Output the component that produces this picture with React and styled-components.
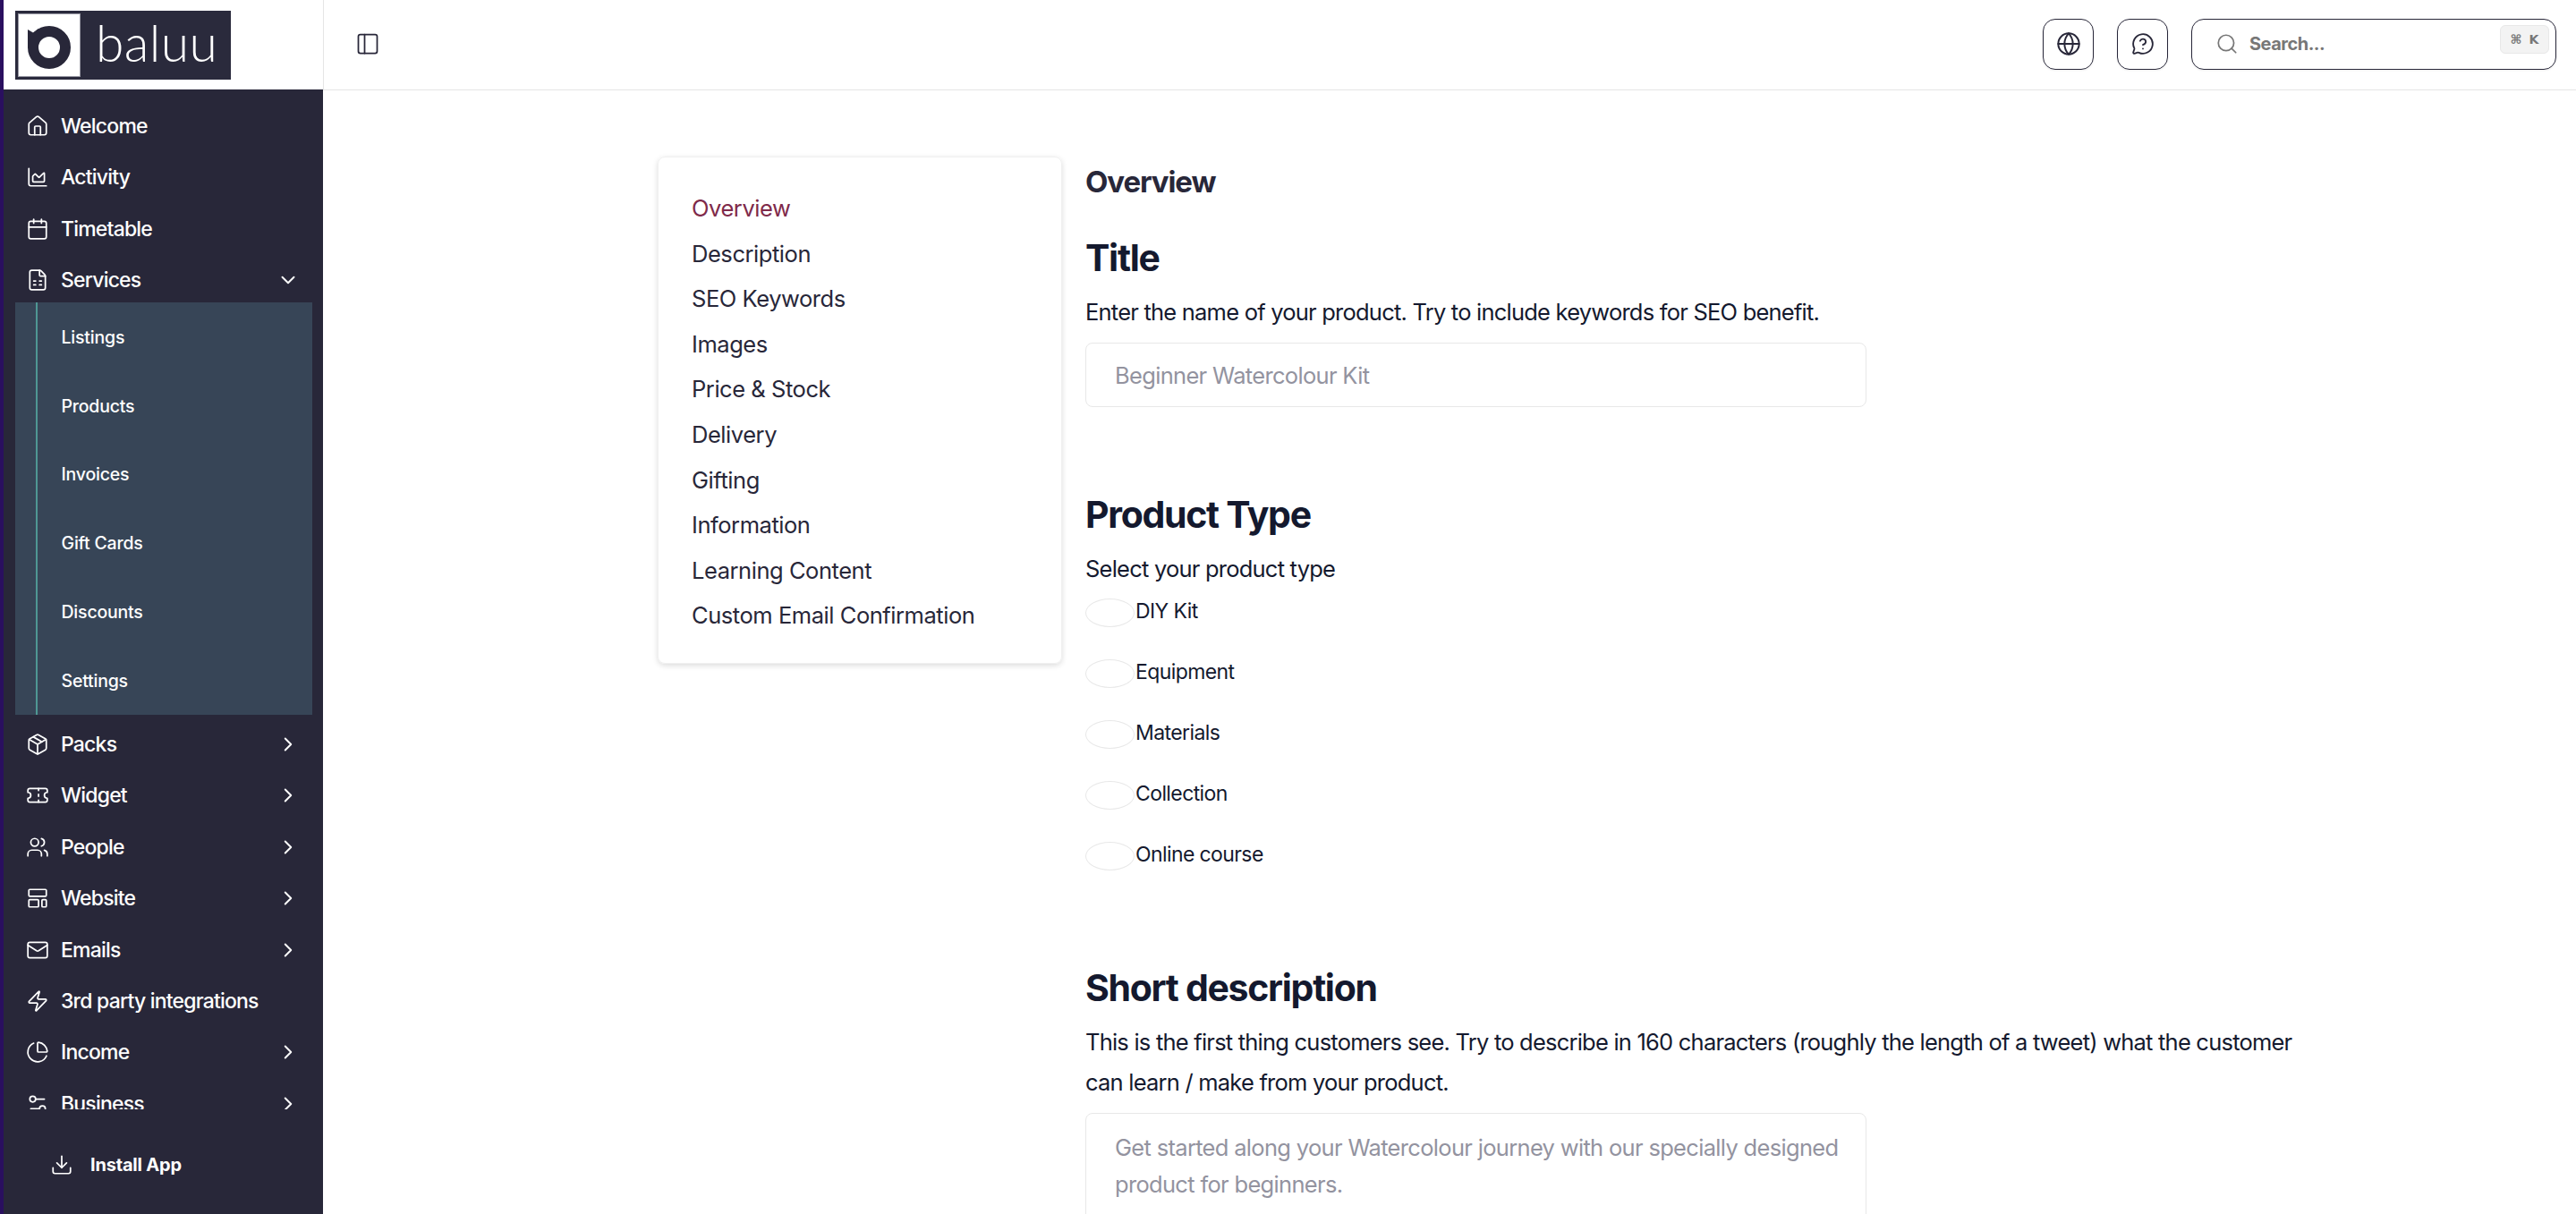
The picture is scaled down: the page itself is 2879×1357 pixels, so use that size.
import {
  Calendar,
  ChartArea,
  ChevronDown,
  ChevronRight,
  Download,
  FileSpreadsheet,
  Globe,
  Home,
  Mail,
  MessageCircleQuestion,
  Package,
  PanelLeft,
  PieChart,
  Search,
  Settings2,
  Ticket,
  Users,
  Zap,
} from "lucide-react";
import styled, { createGlobalStyle } from "styled-components";

const GlobalStyle = createGlobalStyle`
  html, body {
    margin: 0;
    padding: 0;
    background: #fff;
    font-family: Inter, "Liberation Sans", sans-serif;
    overflow: hidden;
  }
  * {
    box-sizing: border-box;
  }
`;

const Page = styled.div`
  display: flex;
  height: 100vh;
  overflow: hidden;
`;

const Sidebar = styled.aside`
  flex: 0 0 361px;
  display: flex;
  flex-direction: column;
  border-left: 4px solid #2a0f5f;
  background: #282739;
`;

const LogoBar = styled.div`
  flex: 0 0 100px;
  padding: 12px 0 0 13px;
  background: #fff;
`;

const LogoBox = styled.div`
  display: flex;
  align-items: center;
  width: 241px;
  height: 77px;
  padding: 3px;
  background: #2a2a3c;
`;

const LogoMark = styled.div`
  flex: 0 0 70px;
  height: 71px;
  background: #fff;
  border: 1px solid #9a9aa5;
`;

const LogoWord = styled.span`
  margin: -6px 0 0 17px;
  font-family: Lato, sans-serif;
  font-size: 57px;
  font-weight: 300;
  line-height: 1;
  letter-spacing: 0.4px;
  color: #fff;
`;

const NavScroll = styled.nav`
  flex: 0 0 1140px;
  display: flex;
  flex-direction: column;
  gap: 7.45px;
  padding-top: 16px;
  overflow: hidden;
`;

const NavRow = styled.div`
  flex: 0 0 50px;
  display: flex;
  align-items: center;
  gap: 13px;
  padding: 0 26px 0 25px;
  font-size: 23px;
  font-weight: 500;
  letter-spacing: -0.8px;
  color: #fff;
`;

const NavLabel = styled.span`
  flex: 1;
`;

const NavGroup = styled.div`
  display: flex;
  flex-direction: column;
`;

const SubPanel = styled.div`
  width: 332px;
  margin-left: 13px;
  padding-left: 23px;
  background: #374557;
`;

const SubList = styled.div`
  border-left: 2px solid #4f9794;
  padding-left: 26.5px;
`;

const SubRow = styled.div`
  display: flex;
  align-items: center;
  height: 76.85px;
  font-size: 19.5px;
  font-weight: 500;
  letter-spacing: -0.2px;
  color: #fff;
`;

const InstallRow = styled.div`
  flex: 1;
  display: flex;
  align-items: center;
  gap: 19px;
  padding: 7px 0 0 52px;
  font-size: 20px;
  font-weight: 700;
  letter-spacing: -0.2px;
  color: #fff;
`;

const Content = styled.div`
  flex: 1;
  display: flex;
  flex-direction: column;
  min-width: 0;
`;

const TopBar = styled.header`
  flex: 0 0 101px;
  display: flex;
  align-items: center;
  padding: 1px 22px 3px 35px;
  border-bottom: 1px solid #e5e5e5;
  border-left: 1px solid #e5e5e5;
`;

const ToggleButton = styled.div`
  display: flex;
  margin-right: auto;
  color: #282739;
`;

const IconButton = styled.div`
  display: flex;
  align-items: center;
  justify-content: center;
  width: 57px;
  height: 57px;
  margin-right: 26px;
  border: 1px solid #282739;
  border-radius: 14px;
  color: #282739;
  box-shadow: 0 1px 2px rgba(0, 0, 0, 0.08);
`;

const SearchBox = styled.div`
  display: flex;
  align-items: center;
  width: 408px;
  height: 57px;
  padding: 0 7px 0 26px;
  border: 1px solid #282739;
  border-radius: 14px;
  color: #777;
  box-shadow: 0 1px 2px rgba(0, 0, 0, 0.08);
`;

const SearchText = styled.span`
  flex: 1;
  margin-left: 12px;
  font-size: 20px;
  font-weight: 700;
  letter-spacing: -0.5px;
`;

const Kbd = styled.kbd`
  display: flex;
  align-items: center;
  justify-content: center;
  gap: 8px;
  width: 55px;
  height: 32px;
  margin-top: -10px;
  border: 1px solid #e8e8e8;
  border-radius: 6px;
  background: #f3f3f3;
  font-family: "DejaVu Sans", sans-serif;
  font-size: 14px;
  font-weight: 700;
  color: #777;
`;

const Main = styled.main`
  flex: 1;
  display: flex;
  align-items: flex-start;
  gap: 26px;
  padding: 73.5px 0 0 374px;
  overflow: hidden;
`;

const SectionCard = styled.div`
  flex: 0 0 452px;
  padding: 32.5px 37px 27.5px;
  border-radius: 8px;
  border: 1px solid #f0f0f0;
  box-shadow: 0 2px 6px rgba(0, 0, 0, 0.14);
`;

const SectionLink = styled.div`
  height: 50.6px;
  line-height: 50.6px;
  font-size: 25.5px;
  letter-spacing: -0.45px;
  color: ${(p) => (p.$active ? "#7f2a4a" : "#282739")};
`;

const Form = styled.div`
  flex: 0 0 1360px;
  padding-top: 8.5px;
`;

const PageTitle = styled.h2`
  margin: 0;
  font-size: 33px;
  font-weight: 700;
  line-height: 40px;
  letter-spacing: -1.1px;
  color: #282739;
`;

const Heading = styled.h3`
  margin: ${(p) => p.$top}px 0 0;
  font-size: 41px;
  font-weight: 700;
  line-height: 50px;
  letter-spacing: -1.3px;
  color: #14192e;
`;

const Help = styled.p`
  margin: 13px 0 0;
  font-size: 25.5px;
  line-height: 45px;
  letter-spacing: -0.78px;
  color: #14192e;
`;

const TextInput = styled.input`
  display: block;
  width: 873px;
  height: 72px;
  margin-top: 12px;
  padding: 0 32px;
  border: 1px solid #e8e8e8;
  border-radius: 8px;
  font: inherit;
  font-size: 25.5px;
  letter-spacing: -0.68px;

  &::placeholder {
    color: #93939f;
    opacity: 1;
  }
`;

const TextArea = styled.textarea`
  display: block;
  width: 873px;
  height: 200px;
  margin-top: 12px;
  padding: 17px 16px 17px 32px;
  border: 1px solid #e8e8e8;
  border-radius: 8px;
  resize: none;
  font: inherit;
  font-size: 25.5px;
  line-height: 41px;
  letter-spacing: -0.68px;

  &::placeholder {
    color: #93939f;
    opacity: 1;
  }
`;

const RadioList = styled.div`
  display: flex;
  flex-direction: column;
  gap: 36px;
  margin-top: 11px;
`;

const RadioRow = styled.label`
  display: flex;
  align-items: center;
  height: 32px;
  font-size: 23px;
  letter-spacing: -0.6px;
  color: #14192e;
`;

const RadioOval = styled.span`
  flex: 0 0 55px;
  height: 32px;
  border: 1px solid #e8e8e8;
  border-radius: 50%;
`;

const RadioText = styled.span`
  margin: -5px 0 0 1px;
`;

const LayoutIcon = ({ size, strokeWidth }) => (
  <svg width={size} height={size} viewBox="0 0 24 24" fill="none" stroke="currentColor" strokeWidth={strokeWidth} strokeLinejoin="round">
    <rect x="3" y="3" width="18" height="7" rx="1" />
    <rect x="3" y="13.5" width="10" height="7.5" rx="1" />
    <rect x="16.5" y="13.5" width="4.5" height="7.5" rx="1" />
  </svg>
);

const BaluuMark = () => (
  <svg width="68" height="69" viewBox="0 0 68 69">
    <polygon points="10,17 16,20.5 22,16 24,30 10,38" fill="#282739" />
    <circle cx="34" cy="37" r="18" fill="#fff" stroke="#282739" strokeWidth="12" />
  </svg>
);

// rows before and after the open Services group
const topNav = [
  { label: "Welcome", icon: Home },
  { label: "Activity", icon: ChartArea },
  { label: "Timetable", icon: Calendar },
];

const bottomNav = [
  { label: "Packs", icon: Package, more: true },
  { label: "Widget", icon: Ticket, more: true },
  { label: "People", icon: Users, more: true },
  { label: "Website", icon: LayoutIcon, more: true },
  { label: "Emails", icon: Mail, more: true },
  { label: "3rd party integrations", icon: Zap },
  { label: "Income", icon: PieChart, more: true },
  { label: "Business", icon: Settings2, more: true },
];

const subNav = ["Listings", "Products", "Invoices", "Gift Cards", "Discounts", "Settings"];

const sections = [
  "Overview",
  "Description",
  "SEO Keywords",
  "Images",
  "Price & Stock",
  "Delivery",
  "Gifting",
  "Information",
  "Learning Content",
  "Custom Email Confirmation",
];

const productTypes = ["DIY Kit", "Equipment", "Materials", "Collection", "Online course"];

const Row = ({ item }) => {
  const Icon = item.icon;
  return (
    <NavRow>
      <Icon size={26} strokeWidth={1.6} />
      <NavLabel>{item.label}</NavLabel>
      {item.more && <ChevronRight size={26} strokeWidth={1.8} />}
    </NavRow>
  );
};

const App = () => {
  return (
    <Page>
      <GlobalStyle />
      <Sidebar>
        <LogoBar>
          <LogoBox>
            <LogoMark>
              <BaluuMark />
            </LogoMark>
            <LogoWord>baluu</LogoWord>
          </LogoBox>
        </LogoBar>
        <NavScroll>
          {topNav.map((item) => (
            <Row key={item.label} item={item} />
          ))}
          <NavGroup>
            <NavRow>
              <FileSpreadsheet size={26} strokeWidth={1.6} />
              <NavLabel>Services</NavLabel>
              <ChevronDown size={26} strokeWidth={1.8} />
            </NavRow>
            <SubPanel>
              <SubList>
                {subNav.map((label) => (
                  <SubRow key={label}>{label}</SubRow>
                ))}
              </SubList>
            </SubPanel>
          </NavGroup>
          {bottomNav.map((item) => (
            <Row key={item.label} item={item} />
          ))}
        </NavScroll>
        <InstallRow>
          <Download size={26} strokeWidth={1.6} />
          Install App
        </InstallRow>
      </Sidebar>
      <Content>
        <TopBar>
          <ToggleButton>
            <PanelLeft size={28} strokeWidth={1.5} />
          </ToggleButton>
          <IconButton>
            <Globe size={28} strokeWidth={1.7} />
          </IconButton>
          <IconButton>
            <MessageCircleQuestion size={26} strokeWidth={1.7} />
          </IconButton>
          <SearchBox>
            <Search size={26} strokeWidth={1.6} />
            <SearchText>Search...</SearchText>
            <Kbd>
              <span>⌘</span>
              <span>K</span>
            </Kbd>
          </SearchBox>
        </TopBar>
        <Main>
          <SectionCard>
            {sections.map((label, i) => (
              <SectionLink key={label} $active={i === 0}>
                {label}
              </SectionLink>
            ))}
          </SectionCard>
          <Form>
            <PageTitle>Overview</PageTitle>
            <Heading $top={40}>Title</Heading>
            <Help>Enter the name of your product. Try to include keywords for SEO benefit.</Help>
            <TextInput placeholder="Beginner Watercolour Kit" />
            <Heading $top={95}>Product Type</Heading>
            <Help>Select your product type</Help>
            <RadioList>
              {productTypes.map((label) => (
                <RadioRow key={label}>
                  <RadioOval />
                  <RadioText>{label}</RadioText>
                </RadioRow>
              ))}
            </RadioList>
            <Heading $top={105.5}>Short description</Heading>
            <Help>
              This is the first thing customers see. Try to describe in 160 characters (roughly the length of a tweet)
              what the customer can learn / make from your product.
            </Help>
            <TextArea placeholder="Get started along your Watercolour journey with our specially designed product for beginners." />
          </Form>
        </Main>
      </Content>
    </Page>
  );
};

export default App;
